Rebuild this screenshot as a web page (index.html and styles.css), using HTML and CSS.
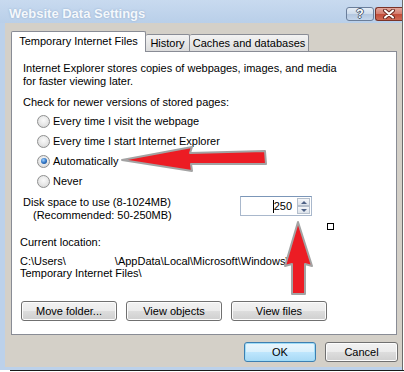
FILE: index.html
```html
<!DOCTYPE html>
<html lang="en">
<head>
    <meta charset="UTF-8">
    <title>Website Data Settings</title>
    <link rel="stylesheet" href="styles.css">
</head>
<body>
    <div class="window">
        <div class="titlebar">
            <span class="title">Website Data Settings</span>
            <div class="caption-btns">
                <span class="cap-btn help">?</span>
                <span class="cap-btn close">
                    <svg width="14" height="10" viewBox="0 0 14 10">
                        <path d="M3 1.5 L11 8.5 M11 1.5 L3 8.5" stroke="#6a2a22" stroke-width="4" stroke-linecap="round"/>
                        <path d="M3 1.5 L11 8.5 M11 1.5 L3 8.5" stroke="#fff" stroke-width="2" stroke-linecap="round"/>
                    </svg>
                </span>
            </div>
        </div>
        <div class="client">
            <div class="tabs">
                <div class="tab active">Temporary Internet Files</div>
                <div class="tab tab-history">History</div>
                <div class="tab tab-caches">Caches and databases</div>
            </div>
            <div class="panel">
                <p class="intro">Internet Explorer stores copies of webpages, images, and media<br>for faster viewing later.</p>
                <p class="group-label">Check for newer versions of stored pages:</p>
                <ul class="radios">
                    <li class="radio"><span class="dot"></span>Every time I visit the webpage</li>
                    <li class="radio"><span class="dot"></span>Every time I start Internet Explorer</li>
                    <li class="radio"><span class="dot checked"></span>Automatically</li>
                    <li class="radio"><span class="dot"></span>Never</li>
                </ul>
                <div class="disk-row">
                    <div class="disk-label">Disk space to use (8-1024MB)<br><span class="indent">(Recommended: 50-250MB)</span></div>
                    <div class="spin">
                        <div class="spin-value"><span class="caret"></span>250</div>
                        <div class="spin-arrows">
                            <span class="spin-btn up"></span>
                            <span class="spin-btn down"></span>
                        </div>
                    </div>
                </div>
                <div class="location">
                    <div class="loc-label">Current location:</div>
                    <div class="loc-path">C:\Users\<span class="blank"></span>\AppData\Local\Microsoft\Windows\<br>Temporary Internet Files\</div>
                </div>
                <div class="btn-row">
                    <button class="btn wide">Move folder...</button>
                    <button class="btn wide">View objects</button>
                    <button class="btn wide">View files</button>
                </div>
                <span class="handle"></span>
            </div>
            <div class="footer">
                <button class="btn ok">OK</button>
                <button class="btn cancel">Cancel</button>
            </div>
        </div>
    </div>
    <div class="desk-edge"></div>

    <svg class="arrows" width="404" height="372" viewBox="0 0 404 372">
        <polygon points="122,160 192,147 190,153 265,151 266,164 191,164 192,171" fill="#ec1c24" stroke="#a3a3a3" stroke-width="2" stroke-linejoin="round"/>
        <polygon points="298,222 312,266 305,264 305,294 292,294 292,264 285,266" fill="#ec1c24" stroke="#a3a3a3" stroke-width="2" stroke-linejoin="round"/>
    </svg>
</body>
</html>
```

FILE: styles.css
```css
* { margin: 0; padding: 0; box-sizing: border-box; }
body { width: 404px; height: 372px; overflow: hidden; background: #fff; font-family: "Liberation Sans", Arial, sans-serif; font-size: 11px; color: #000; position: relative; }

.window { width: 403px; height: 370px; background: #bcd1ea; padding: 0 0 3px 5px; border-right: 1px solid #6b6b6b; }
.titlebar { height: 23px; margin-left: -5px; padding-left: 9px; display: flex; align-items: center; justify-content: space-between; background: linear-gradient(#c8daef, #b9cfe9); }
.title { font-size: 13px; font-weight: bold; color: #f4f8fc; text-shadow: 0 0 2px #8ea8c8; margin-top: 3px; }
.caption-btns { display: flex; align-self: flex-start; margin-top: 7px; gap: 1px; }
.cap-btn { height: 14px; display: flex; align-items: center; justify-content: center; border: 1px solid #6a7e9a; border-radius: 3px; }
.help { width: 28px; background: linear-gradient(#e4ecf6 0%, #cddbeb 50%, #b3c7df 51%, #c4d5ea 100%); color: #fff; font-weight: bold; font-size: 12px; text-shadow: 1px 0 0 #4a5a70, -1px 0 0 #4a5a70, 0 1px 0 #4a5a70, 0 -1px 0 #4a5a70; }
.close { width: 27px; border-color: #7a3328; background: linear-gradient(#e3a69b 0%, #d47c6e 50%, #c24b39 51%, #cf6a55 100%); border-right: none; border-radius: 3px 0 0 3px; }

.client { height: 344px; background: #d4d0c8; padding: 8px 5px 0 6px; }

.tabs { display: flex; align-items: flex-end; height: 20px; }
.tab { height: 17px; border: 1px solid #898c95; border-bottom: none; border-left: none; background: linear-gradient(#f3f3f3, #dcdcdc); text-align: center; line-height: 16px; border-radius: 2px 2px 0 0; }
.tab.active { width: 135px; height: 21px; margin-bottom: -1px; background: #fff; border-left: 1px solid #898c95; position: relative; z-index: 1; line-height: 19px; }
.tab-history { width: 44px; }
.tab-caches { width: 119px; }

.panel { position: relative; width: 386px; height: 284px; background: #fff; border: 1px solid #898c95; padding: 10px 0 0 11px; }
.intro { line-height: 13px; }
.group-label { line-height: 13px; margin-top: 8px; }
.radios { list-style: none; margin-top: 2px; }
.radio { display: flex; align-items: center; height: 20px; padding-left: 14px; }
.dot { width: 13px; height: 13px; border-radius: 50%; border: 1px solid #8e8f8f; background: radial-gradient(circle at 50% 40%, #fafafa 0%, #e6e6e6 55%, #cfcfcf 100%); margin-right: 3px; display: flex; align-items: center; justify-content: center; }
.dot.checked::after { content: ""; width: 6px; height: 6px; border-radius: 50%; background: radial-gradient(circle at 40% 35%, #9fd0ff 0%, #2a6fc0 55%, #173f7a 100%); }

.disk-row { display: flex; align-items: flex-start; margin-top: 5px; }
.disk-label { width: 217px; line-height: 13px; }
.indent { padding-left: 10px; }
.spin { width: 72px; height: 20px; display: flex; border: 1px solid #a9b8cc; border-top-color: #7b96b8; background: #fff; }
.spin-value { flex: 1; text-align: right; padding-right: 5px; line-height: 18px; display: flex; justify-content: flex-end; align-items: center; }
.caret { width: 1px; height: 13px; background: #000; margin-right: 0; }
.spin-arrows { width: 14px; display: flex; flex-direction: column; padding: 1px 1px 1px 0; }
.spin-btn { flex: 1; border: 1px solid #b5bfcc; background: linear-gradient(#f4f6f9, #dde3ea); display: flex; align-items: center; justify-content: center; }
.spin-btn.up::after { content: ""; border: 3px solid transparent; border-bottom: 3px solid #4d6185; border-top: none; }
.spin-btn.down::after { content: ""; border: 3px solid transparent; border-top: 3px solid #4d6185; border-bottom: none; }

.location { margin-top: 14px; margin-left: -3px; }
.loc-label { line-height: 13px; margin-bottom: 6px; }
.loc-path { line-height: 12px; }
.blank { display: inline-block; width: 49px; }

.btn-row { display: flex; gap: 9px; margin-top: 22px; margin-left: -2px; }
.btn { height: 20px; font-family: inherit; font-size: 11px; color: #000; border: 1px solid #707070; border-radius: 3px; background: linear-gradient(#f2f2f2 0%, #ebebeb 50%, #dddddd 51%, #cfcfcf 100%); box-shadow: inset 0 0 0 1px #fcfcfc; }
.wide { width: 96px; }

.footer { display: flex; justify-content: flex-end; gap: 9px; margin-top: 7px; padding-right: 0; margin-right: -1px; }
.ok { width: 72px; border-color: #3c7fb1; box-shadow: inset 0 0 0 1px #9fdcf7; background: linear-gradient(#eaf6fd 0%, #d9f0fc 50%, #bee6fd 51%, #a7d9f5 100%); }
.cancel { width: 73px; }

.handle { position: absolute; left: 315px; top: 171px; width: 7px; height: 7px; border: 1px solid #000; background: #fff; }

.desk-edge { height: 2px; margin-left: 10px; border-top: 1px solid #1a1a1a; }
.arrows { position: absolute; left: 0; top: 0; pointer-events: none; }
```
